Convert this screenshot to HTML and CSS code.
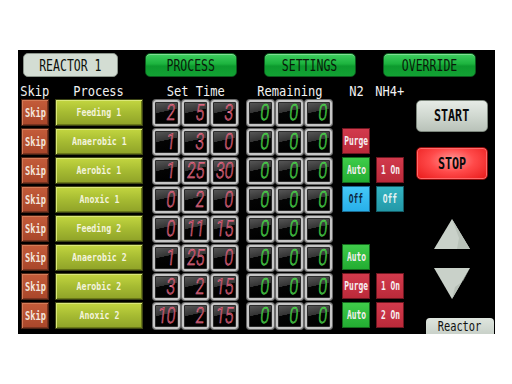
FILE: index.html
```html
<!DOCTYPE html>
<html>
<head>
<meta charset="utf-8">
<link rel="stylesheet" href="styles.css">
</head>
<body>
<div class="panel">
  <div class="topbar">
    <div class="tbtn reactor"><span class="c">REACTOR 1</span></div>
    <div class="tbtn green"><span class="c">PROCESS</span></div>
    <div class="tbtn green"><span class="c">SETTINGS</span></div>
    <div class="tbtn green"><span class="c">OVERRIDE</span></div>
  </div>
  <div class="body">
    <div class="grid">
      <div class="row head">
        <div class="skipc"><span class="h">Skip</span></div>
        <div class="procc"><span class="h">Process</span></div>
        <div class="timec"><span class="h">Set Time</span></div>
        <div class="timec rem"><span class="h">Remaining</span></div>
        <div class="n2c"><span class="h">N2</span></div>
        <div class="nhc"><span class="h">NH4+</span></div>
      </div>

      <div class="row">
        <div class="skipc skip"><span class="c">Skip</span></div>
        <div class="procc proc"><span class="c">Feeding 1</span></div>
        <div class="timec"><div class="box"><span class="d red">2</span></div><div class="box"><span class="d red">5</span></div><div class="box"><span class="d red">3</span></div></div>
        <div class="timec rem"><div class="box"><span class="d grn">0</span></div><div class="box"><span class="d grn">0</span></div><div class="box"><span class="d grn">0</span></div></div>
        <div class="n2c"></div>
        <div class="nhc"></div>
      </div>

      <div class="row">
        <div class="skipc skip"><span class="c">Skip</span></div>
        <div class="procc proc"><span class="c">Anaerobic 1</span></div>
        <div class="timec"><div class="box"><span class="d red">1</span></div><div class="box"><span class="d red">3</span></div><div class="box"><span class="d red">0</span></div></div>
        <div class="timec rem"><div class="box"><span class="d grn">0</span></div><div class="box"><span class="d grn">0</span></div><div class="box"><span class="d grn">0</span></div></div>
        <div class="n2c sb purge"><span class="c">Purge</span></div>
        <div class="nhc"></div>
      </div>

      <div class="row">
        <div class="skipc skip"><span class="c">Skip</span></div>
        <div class="procc proc"><span class="c">Aerobic 1</span></div>
        <div class="timec"><div class="box"><span class="d red">1</span></div><div class="box"><span class="d red">25</span></div><div class="box"><span class="d red">30</span></div></div>
        <div class="timec rem"><div class="box"><span class="d grn">0</span></div><div class="box"><span class="d grn">0</span></div><div class="box"><span class="d grn">0</span></div></div>
        <div class="n2c sb auto"><span class="c">Auto</span></div>
        <div class="nhc sb purge"><span class="c">1 On</span></div>
      </div>

      <div class="row">
        <div class="skipc skip"><span class="c">Skip</span></div>
        <div class="procc proc"><span class="c">Anoxic 1</span></div>
        <div class="timec"><div class="box"><span class="d red">0</span></div><div class="box"><span class="d red">2</span></div><div class="box"><span class="d red">0</span></div></div>
        <div class="timec rem"><div class="box"><span class="d grn">0</span></div><div class="box"><span class="d grn">0</span></div><div class="box"><span class="d grn">0</span></div></div>
        <div class="n2c sb offb"><span class="c">Off</span></div>
        <div class="nhc sb offt"><span class="c">Off</span></div>
      </div>

      <div class="row">
        <div class="skipc skip"><span class="c">Skip</span></div>
        <div class="procc proc"><span class="c">Feeding 2</span></div>
        <div class="timec"><div class="box"><span class="d red">0</span></div><div class="box"><span class="d red">11</span></div><div class="box"><span class="d red">15</span></div></div>
        <div class="timec rem"><div class="box"><span class="d grn">0</span></div><div class="box"><span class="d grn">0</span></div><div class="box"><span class="d grn">0</span></div></div>
        <div class="n2c"></div>
        <div class="nhc"></div>
      </div>

      <div class="row">
        <div class="skipc skip"><span class="c">Skip</span></div>
        <div class="procc proc"><span class="c">Anaerobic 2</span></div>
        <div class="timec"><div class="box"><span class="d red">1</span></div><div class="box"><span class="d red">25</span></div><div class="box"><span class="d red">0</span></div></div>
        <div class="timec rem"><div class="box"><span class="d grn">0</span></div><div class="box"><span class="d grn">0</span></div><div class="box"><span class="d grn">0</span></div></div>
        <div class="n2c sb auto"><span class="c">Auto</span></div>
        <div class="nhc"></div>
      </div>

      <div class="row">
        <div class="skipc skip"><span class="c">Skip</span></div>
        <div class="procc proc"><span class="c">Aerobic 2</span></div>
        <div class="timec"><div class="box"><span class="d red">3</span></div><div class="box"><span class="d red">2</span></div><div class="box"><span class="d red">15</span></div></div>
        <div class="timec rem"><div class="box"><span class="d grn">0</span></div><div class="box"><span class="d grn">0</span></div><div class="box"><span class="d grn">0</span></div></div>
        <div class="n2c sb purge"><span class="c">Purge</span></div>
        <div class="nhc sb purge"><span class="c">1 On</span></div>
      </div>

      <div class="row">
        <div class="skipc skip"><span class="c">Skip</span></div>
        <div class="procc proc"><span class="c">Anoxic 2</span></div>
        <div class="timec"><div class="box"><span class="d red">10</span></div><div class="box"><span class="d red">2</span></div><div class="box"><span class="d red">15</span></div></div>
        <div class="timec rem"><div class="box"><span class="d grn">0</span></div><div class="box"><span class="d grn">0</span></div><div class="box"><span class="d grn">0</span></div></div>
        <div class="n2c sb auto"><span class="c">Auto</span></div>
        <div class="nhc sb purge"><span class="c">2 On</span></div>
      </div>
    </div>

    <div class="side">
      <div class="bigbtn start"><span class="c">START</span></div>
      <div class="bigbtn stop"><span class="c">STOP</span></div>
      <svg class="arrow up" width="38" height="32" viewBox="0 0 38 32">
        <polygon points="19,1 37,31 1,31" fill="#c9d1c9"/>
        <polygon points="19,1 37,31 24,31 26,20" fill="#b9c2b9"/>
      </svg>
      <svg class="arrow down" width="38" height="33" viewBox="0 0 38 33">
        <polygon points="1,1 37,1 19,32" fill="#c9d1c9"/>
        <polygon points="37,1 19,32 22,20 30,14" fill="#b6bfb6"/>
      </svg>
      <div class="tab"><span class="c">Reactor</span></div>
    </div>
  </div>
</div>
</body>
</html>
```

FILE: styles.css
```css
html, body {
  margin: 0;
  padding: 0;
  background: #ffffff;
}
body {
  font-family: "DejaVu Sans Mono", "Liberation Mono", monospace;
}
.panel {
  margin: 50px 0 0 18px;
  width: 477px;
  height: 284px;
  background: #000;
  display: flex;
  flex-direction: column;
  overflow: hidden;
}
.c {
  display: inline-block;
  white-space: nowrap;
}
.topbar {
  display: flex;
  gap: 27px;
  padding: 3px 0 0 5px;
  height: 24px;
}
.tbtn {
  height: 24px;
  box-sizing: border-box;
  border-radius: 5px;
  display: flex;
  align-items: center;
  justify-content: center;
  font-size: 16px;
  color: #0a0f0a;
}
.tbtn .c { transform: scaleX(.72); }
.reactor {
  width: 95px;
  background: #d3ddd3;
  border: 1px solid #8a948a;
}
.green {
  width: 92px;
  background: linear-gradient(#3fd060 0%, #1cb33e 45%, #0d9a2e 55%, #12a233 100%);
  border: 1px solid #0a5a1c;
  box-shadow: inset 0 1px 0 rgba(255,255,255,.35);
  color: #081a08;
}
.green:last-child { width: 93px; }
.body {
  display: flex;
  flex: 1;
}
.grid {
  padding-left: 3px;
  display: flex;
  flex-direction: column;
  gap: 2px;
}
.row {
  display: flex;
  height: 27px;
}
.row.head {
  height: 20px;
  align-items: flex-end;
  color: #f2f2f2;
  font-size: 14px;
  line-height: 12px;
}
.row.head > div {
  display: flex;
  justify-content: center;
}
.h {
  display: inline-block;
  white-space: nowrap;
  transform: scaleX(.86);
}
.skipc { width: 28px; }
.procc { width: 88px; margin-left: 6px; }
.timec { width: 85px; margin-left: 10px; display: flex; gap: 2px; }
.timec.rem { margin-left: 9px; }
.n2c { width: 28px; margin-left: 10px; }
.nhc { width: 28px; margin-left: 6px; }

.skip {
  box-sizing: border-box;
  background: linear-gradient(#c45c3a, #a8462a);
  border: 1px solid #4a2214;
  box-shadow: inset 1px 1px 0 #d47c58, inset -1px -1px 0 #7a3420;
  display: flex;
  align-items: center;
  justify-content: center;
  font-size: 12px;
  font-weight: bold;
  color: #f4e6dc;
}
.skip .c { transform: scaleX(.72); }
.proc {
  box-sizing: border-box;
  background: linear-gradient(#c3d640, #a6bb32 50%, #8fa228);
  border: 1px solid #3c4414;
  box-shadow: inset 1px 1px 0 #dbe87a, inset -1px -1px 0 #6a7818;
  display: flex;
  align-items: center;
  justify-content: center;
  font-size: 11px;
  font-weight: bold;
  color: #f3f3dc;
}
.proc .c { transform: scaleX(.75); }

.box {
  width: 27px;
  height: 26px;
  margin-top: 1px;
  box-sizing: border-box;
  border: 2px solid #c6c6c6;
  border-radius: 3px;
  box-shadow: 0 0 0 1px #6a6a6a, inset 0 0 0 1px #2a2a2a;
  background: linear-gradient(168deg, #5a5a5a 0%, #333 42%, #040404 43%, #000 100%);
  display: flex;
  align-items: center;
  justify-content: flex-end;
  padding-right: 3px;
  overflow: hidden;
}
.d {
  display: inline-block;
  font-family: "Roboto", "Liberation Sans", sans-serif;
  font-weight: 300;
  font-size: 22px;
  line-height: 22px;
  letter-spacing: 0;
  transform: scaleX(.72) skewX(-8deg);
  transform-origin: right center;
  -webkit-text-stroke: 0.6px currentColor;
}
.d.red {
  color: #f07a94;
  -webkit-text-fill-color: #7a2034;
}
.d.grn {
  color: #5cf05c;
  -webkit-text-fill-color: #1a6a1c;
}

.sb {
  height: 26px;
  box-sizing: border-box;
  display: flex;
  align-items: center;
  justify-content: center;
  font-size: 12px;
  font-weight: bold;
  color: #f6eef0;
}
.sb .c { transform: scaleX(.66); }
.purge {
  background: linear-gradient(#d23a4c, #bb2a3a);
  border: 1px solid #6e1620;
}
.auto {
  background: linear-gradient(#3fcc4a, #23ad32);
  border: 1px solid #146a1c;
}
.offb {
  background: linear-gradient(#44c8f6, #28b0ea);
  border: 1px solid #1a6a90;
  color: #0c2a44;
}
.offt {
  background: linear-gradient(#34b4c2, #2399a8);
  border: 1px solid #145c66;
  color: #e4f2f2;
}

.side {
  margin-left: 12px;
  display: flex;
  flex-direction: column;
  width: 79px;
}
.bigbtn {
  width: 72px;
  box-sizing: border-box;
  border-radius: 5px;
  display: flex;
  align-items: center;
  justify-content: center;
  font-size: 15px;
  font-weight: bold;
  color: #0a0a0a;
}
.bigbtn .c { transform: scaleX(.78); }
.start {
  margin-top: 23px;
  height: 32px;
  background: linear-gradient(#e6ebe6, #d0d8d0 50%, #b9c2b9);
  border: 1px solid #7c867c;
}
.stop {
  margin-top: 15px;
  height: 33px;
  background: radial-gradient(ellipse at 50% 40%, #ff9a9a 0%, #ff4a4a 45%, #e81818 100%);
  border: 1px solid #8a0c0c;
  box-shadow: inset 0 0 0 1px #ff6a6a;
}
.arrow {
  display: block;
  align-self: flex-start;
  margin-left: 17px;
}
.arrow.up { margin-top: 38px; }
.arrow.down { margin-top: 17px; }
.tab {
  margin-top: 18px;
  margin-left: 10px;
  width: 68px;
  height: 16px;
  box-sizing: border-box;
  background: linear-gradient(#dfe6df, #c9d1c9);
  border-radius: 4px 4px 0 0;
  display: flex;
  align-items: center;
  justify-content: center;
  font-size: 14px;
  color: #101010;
  line-height: 16px;
}
.tab .c { transform: scaleX(.74); }
```
